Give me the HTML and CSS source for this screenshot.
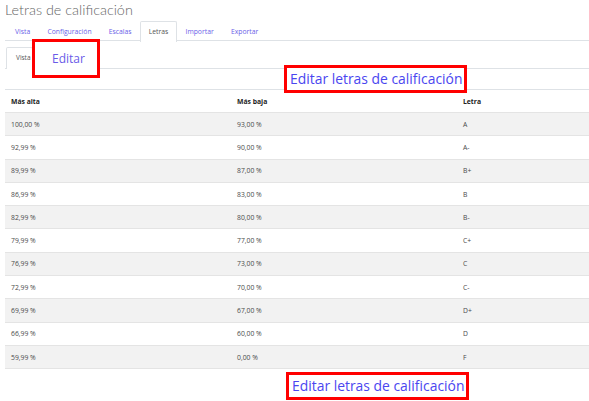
FILE: index.html
```html
<!DOCTYPE html>
<html lang="es">
<head>
<meta charset="utf-8">
<link rel="stylesheet" href="styles.css">
</head>
<body>
<h1 class="title">Letras de calificación</h1>
<nav class="tabs">
  <a class="tab">Vista</a>
  <a class="tab">Configuración</a>
  <a class="tab">Escalas</a>
  <a class="tab active">Letras</a>
  <a class="tab">Importar</a>
  <a class="tab">Exportar</a>
</nav>
<nav class="subtabs">
  <a class="subtab active">Vista</a>
  <a class="subtab edit">Editar</a>
</nav>
<div class="linkrow top"><a class="biglink">Editar letras de calificación</a></div>
<table class="grades">
  <thead>
    <tr><th>Más alta</th><th>Más baja</th><th>Letra</th></tr>
  </thead>
  <tbody>
    <tr><td>100,00 %</td><td>93,00 %</td><td>A</td></tr>
    <tr><td>92,99 %</td><td>90,00 %</td><td>A-</td></tr>
    <tr><td>89,99 %</td><td>87,00 %</td><td>B+</td></tr>
    <tr><td>86,99 %</td><td>83,00 %</td><td>B</td></tr>
    <tr><td>82,99 %</td><td>80,00 %</td><td>B-</td></tr>
    <tr><td>79,99 %</td><td>77,00 %</td><td>C+</td></tr>
    <tr><td>76,99 %</td><td>73,00 %</td><td>C</td></tr>
    <tr><td>72,99 %</td><td>70,00 %</td><td>C-</td></tr>
    <tr><td>69,99 %</td><td>67,00 %</td><td>D+</td></tr>
    <tr><td>66,99 %</td><td>60,00 %</td><td>D</td></tr>
    <tr><td>59,99 %</td><td>0,00 %</td><td>F</td></tr>
  </tbody>
</table>
<div class="linkrow bottom"><a class="biglink">Editar letras de calificación</a></div>
</body>
</html>
```
FILE: styles.css
```css
html, body {
  margin: 0;
  padding: 0;
  background: #fff;
  overflow: hidden;
}
body {
  padding: 0 0 0 5px;
  font-family: "Open Sans", "Noto Sans", sans-serif;
  color: #333;
}
.title {
  margin: 0;
  height: 21px;
  font-family: Lato, "Open Sans", sans-serif;
  font-size: 14.4px;
  line-height: 20px;
  font-weight: 300;
  color: #666;
  white-space: nowrap;
}
.tabs {
  display: flex;
  height: 19px;
  border-bottom: 1px solid #dee2e6;
  padding-left: 1.4px;
}
.tab {
  display: block;
  padding: 0 7.6px;
  font-size: 6.8px;
  line-height: 19px;
  color: #6a62e8;
  border: 1px solid transparent;
  border-bottom: none;
  border-radius: 2px 2px 0 0;
  height: 19px;
}
.tab.active {
  color: #555;
  background: #fff;
  border-color: #dee2e6;
  height: 20px;
}
.subtabs {
  display: flex;
  align-items: flex-start;
  height: 21px;
  margin-top: 6px;
  border-bottom: 1px solid #dee2e6;
}
.subtab {
  display: block;
  font-size: 6.5px;
  line-height: 21px;
  color: #555;
}
.subtab.active {
  width: 27px;
  padding-left: 9px;
  box-sizing: border-box;
  height: 22px;
  margin-left: 1px;
  background: #fff;
  border: 1px solid #dee2e6;
  border-bottom: none;
  border-radius: 2px 2px 0 0;
  line-height: 20px;
}
.subtab.edit {
  position: relative;
  z-index: 2;
  margin-top: -8px;
  margin-left: -1px;
  width: 68px;
  height: 39px;
  box-sizing: border-box;
  border: 3px solid #f00;
  background: #fff;
  font-size: 12px;
  line-height: 33px;
  padding-left: 17px;
  color: #6a5be8;
}
.linkrow {
  position: relative;
  z-index: 2;
  display: flex;
}
.linkrow.top {
  margin-top: -4px;
  margin-bottom: -4px;
  padding-left: 279px;
}
.linkrow.bottom {
  margin-top: 3px;
  padding-left: 281px;
}
.biglink {
  display: block;
  height: 28px;
  box-sizing: border-box;
  border: 3px solid #f00;
  background: #fff;
  padding: 0 2px 0 3px;
  font-size: 13.9px;
  line-height: 22px;
  color: #4a46f0;
  white-space: nowrap;
}
.grades {
  width: 100%;
  border-collapse: collapse;
  table-layout: fixed;
}
.grades th, .grades td {
  text-align: left;
  font-size: 6.8px;
  padding: 0 0 0 6px;
  white-space: nowrap;
}
.grades th:nth-child(1), .grades th:nth-child(2) {
  width: 220px;
}
.grades th {
  height: 22px;
  font-weight: 700;
  color: #222;
  border-top: 1px solid #dee2e6;
}
.grades td {
  height: 22.3px;
  color: #4a4a4a;
  border-top: 1px solid #e4e4e4;
}
.grades tbody tr:nth-child(odd) td {
  background: #f2f2f2;
}
.grades tbody tr:last-child td {
  border-bottom: 1px solid #e4e4e4;
}
```
